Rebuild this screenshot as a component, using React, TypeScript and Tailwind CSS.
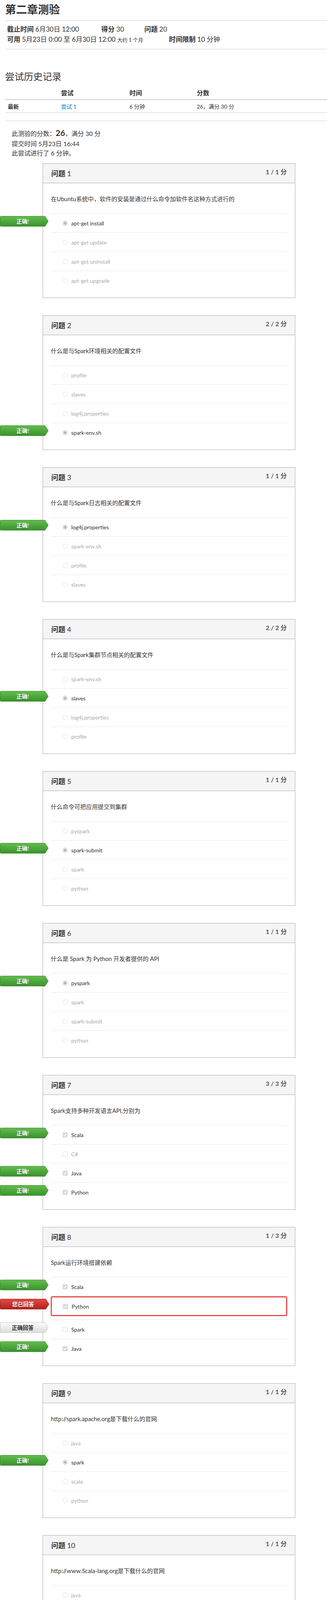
import React from "react";

type Opt = { t: string; sel?: boolean; badge?: "ok" | "you" | "right"; wrongBox?: boolean };
type Q = { text: string; score: string; opts: Opt[]; check?: boolean; unanswered?: boolean };

const tf = (): Opt[] => [{ t: "True", sel: true, badge: "ok" }, { t: "False" }];

const QS: Q[] = [
  { text: "在Ubuntu系统中，软件的安装是通过什么命令加软件名这种方式进行的", score: "1 / 1 分", opts: [{ t: "apt-get install", sel: true, badge: "ok" }, { t: "apt-get update" }, { t: "apt-get uninstall" }, { t: "apt-get upgrade" }] },
  { text: "什么是与Spark环境相关的配置文件", score: "2 / 2 分", opts: [{ t: "profile" }, { t: "slaves" }, { t: "log4j.properties" }, { t: "spark-env.sh", sel: true, badge: "ok" }] },
  { text: "什么是与Spark日志相关的配置文件", score: "1 / 1 分", opts: [{ t: "log4j.properties", sel: true, badge: "ok" }, { t: "spark-env.sh" }, { t: "profile" }, { t: "slaves" }] },
  { text: "什么是与Spark集群节点相关的配置文件", score: "2 / 2 分", opts: [{ t: "spark-env.sh" }, { t: "slaves", sel: true, badge: "ok" }, { t: "log4j.properties" }, { t: "profile" }] },
  { text: "什么命令可把应用提交到集群", score: "1 / 1 分", opts: [{ t: "pyspark" }, { t: "spark-submit", sel: true, badge: "ok" }, { t: "spark" }, { t: "python" }] },
  { text: "什么是 Spark 为 Python 开发者提供的 API", score: "1 / 1 分", opts: [{ t: "pyspark", sel: true, badge: "ok" }, { t: "spark" }, { t: "spark-submit" }, { t: "python" }] },
  { text: "Spark支持多种开发语言API,分别为", score: "3 / 3 分", check: true, opts: [{ t: "Scala", sel: true, badge: "ok" }, { t: "C#" }, { t: "Java", sel: true, badge: "ok" }, { t: "Python", sel: true, badge: "ok" }] },
  { text: "Spark运行环境搭建依赖", score: "1 / 3 分", check: true, opts: [{ t: "Scala", sel: true, badge: "ok" }, { t: "Python", sel: true, badge: "you", wrongBox: true }, { t: "Spark", badge: "right" }, { t: "Java", sel: true, badge: "ok" }] },
  { text: "http://spark.apache.org是下载什么的官网", score: "1 / 1 分", opts: [{ t: "java" }, { t: "spark", sel: true, badge: "ok" }, { t: "scala" }, { t: "python" }] },
  { text: "http://www.Scala-lang.org是下载什么的官网", score: "1 / 1 分", opts: [{ t: "java" }, { t: "spark" }, { t: "python" }, { t: "scala", sel: true, badge: "ok" }] },
  { text: "http://www.oracle.com是下载什么的官网", score: "1 / 1 分", opts: [{ t: "spark" }, { t: "python" }, { t: "java", sel: true, badge: "ok" }, { t: "pyspark" }] },
  { text: "Spark在使用之前，需要进行一定的配置，主要包括", score: "3 / 3 分", check: true, opts: [{ t: "修改Spark文件夹的访问权限", sel: true, badge: "ok" }, { t: "安装SSH", sel: true, badge: "ok" }, { t: "修改环境变量", sel: true, badge: "ok" }, { t: "节点参数配置", sel: true, badge: "ok" }] },
  { text: "Spark使用Scala语言进行开发，Scala运行在Java平台之上，因此需要下载并安装JDK和Scala。", score: "1 / 1 分", opts: tf() },
  { text: "集群启动完毕后，可以使用spark-submit命令进行任务的提交。", score: "1 / 1 分", opts: tf() },
  { text: "Spark在使用之前，需要进行一定的配置。主要包括安装SSH，实现免密码登录，修改环境变量，修改Spark文件夹的访问权限，节点参数配置等。", score: "1 / 1 分", opts: tf() },
  { text: "SSH（Secure Shell）是一种安全的传输协议。通过SSH协议对传输的数据进行加密，可用来登录远程主机，从而有效防止远程管理过程中的信息泄露问题", score: "1 / 1 分", opts: tf() },
  { text: "Windows操作系统里面的环境变量的设置是图形化的工具，在Linux里面需要手动的修改/etc/profile文件，也可以修改~/.bashrc文件。", score: "1 / 1 分", opts: tf() },
  { text: "Spark应用最终是以提交集群任务的方式进行的，所以在提交应用之前需要先启动集群，并查看集群状态，确保集群处于正常的可使用状态。", score: "0 / 2 分", unanswered: true, opts: [{ t: "True", badge: "right" }, { t: "False" }] },
  { text: "应用提交集群后，应用的基本信息和运行情况都将会在web界面中展现出来。", score: "1 / 1 分", opts: tf() },
  { text: "spark监控界面completed applications列表中，将会出现运行过的应用。包括应用的名称，使用的核心、内存、提交时间、所有者和运行时间等信息。", score: "2 / 2 分", opts: tf() },
];

function Badge({ kind, label, w }: { kind: "green" | "red" | "gray"; label: string; w: number }) {
  const id = "g" + kind;
  const stops =
    kind === "green" ? ["#62bd4d", "#3a932d"] : kind === "red" ? ["#e04a45", "#b4201f"] : ["#fbfbfb", "#dcdcdc"];
  return (
    <div className="relative h-[27px]" style={{ width: w }}>
      <svg width={w} height={27} className="absolute left-0 top-0">
        <defs>
          <linearGradient id={id} x1="0" y1="0" x2="0" y2="1">
            <stop offset="0" stopColor={stops[0]} />
            <stop offset="1" stopColor={stops[1]} />
          </linearGradient>
        </defs>
        <path
          d={`M0.5 2.5 Q0.5 0.5 2.5 0.5 L${w - 9} 0.5 L${w - 0.5} 13.5 L${w - 9} 26.5 L2.5 26.5 Q0.5 26.5 0.5 24.5 Z`}
          fill={`url(#${id})`}
          stroke={kind === "gray" ? "#c4c4c4" : kind === "green" ? "#3a8a2c" : "#a41c1c"}
          strokeWidth="1"
        />
      </svg>
      <div
        className={`relative flex h-[27px] items-center justify-center pr-[8px] text-[14px] font-bold leading-[18px] ${
          kind === "gray" ? "text-[#333]" : "text-white [text-shadow:0_1px_1px_rgba(0,0,0,0.45)]"
        }`}
      >
        {label}
      </div>
    </div>
  );
}

function Marker({ sel, check }: { sel?: boolean; check?: boolean }) {
  if (check)
    return (
      <span
        className={`flex h-[13px] w-[13px] shrink-0 items-center justify-center rounded-[2px] border ${
          sel ? "border-[#d4d4d4] bg-[#dcdcdc]" : "border-[#d8d8d8] bg-white"
        }`}
      >
        {sel && (
          <svg width="9" height="9" viewBox="0 0 9 9">
            <path d="M1.5 4.8 L3.6 6.8 L7.6 2" stroke="#fff" strokeWidth="1.6" fill="none" />
          </svg>
        )}
      </span>
    );
  return (
    <span
      className={`flex h-[13px] w-[13px] shrink-0 items-center justify-center rounded-full border ${
        sel ? "border-[#c6c6c6] bg-[#ececec]" : "border-[#dcdcdc] bg-white"
      }`}
    >
      {sel && <span className="h-[7px] w-[7px] rounded-full bg-[#b8b8b8]" />}
    </span>
  );
}

function Answer({ o, check }: { o: Opt; check?: boolean }) {
  const dark = o.sel || o.badge === "right";
  const inner = (
    <div className="flex items-center gap-[9px] pl-[30px]">
      <Marker sel={o.sel} check={check} />
      <span className={dark ? "text-[#333]" : "text-[#aaa]"}>{o.t}</span>
    </div>
  );
  return (
    <div className="relative border-t border-[#e8e8e8] text-[14px]">
      {o.badge && (
        <div className="absolute left-[-130px] top-[6px]">
          {o.badge === "ok" && <Badge kind="green" label="正确!" w={124} />}
          {o.badge === "you" && <Badge kind="red" label="您已回答" w={126} />}
          {o.badge === "right" && <Badge kind="gray" label="正确回答" w={124} />}
        </div>
      )}
      {o.wrongBox ? (
        <div className="pb-[9px]">
          <div className="flex h-[50px] items-center rounded-[4px] border-2 border-[#f00000]">
            <div className="ml-[-1px]">{inner}</div>
          </div>
        </div>
      ) : (
        <div className="flex h-[48px] items-center">{inner}</div>
      )}
    </div>
  );
}

function Card({ q, n }: { q: Q; n: number }) {
  return (
    <div className="relative ml-[96px] w-[646px] border border-[#aaa] bg-white">
      {q.unanswered && (
        <div className="absolute left-[-110px] top-[11px]">
          <Badge kind="red" label="未回答" w={124} />
        </div>
      )}
      <div className="flex h-[50px] items-start justify-between border-b border-[#aaa] bg-[#f5f5f5] px-[21px]">
        <div className="pt-[12px] text-[18px] font-bold text-[#333]">
          问题 <span className="font-normal">{n}</span>
        </div>
        <div className="pt-[9px] text-[16px] font-bold text-[#555]">{q.score}</div>
      </div>
      <div className="px-[20px] pb-[20px]">
        <div className="pb-[25px] pt-[28px] text-[15px] leading-[24px] text-[#333]">{q.text}</div>
        {q.opts.map((o, i) => (
          <Answer key={i} o={o} check={q.check} />
        ))}
      </div>
    </div>
  );
}

export default function App() {
  return (
    <div className="w-[836px] overflow-hidden bg-white text-[#333]" style={{ fontFamily: "Lato, 'Noto Sans CJK SC', sans-serif" }}>
      <div className="ml-[13px] w-[840px]">
        <h1 className="pt-[6px] text-[28px] font-bold leading-[36px] text-[#333]">第二章测验</h1>
        <div className="mt-[10px] border-t border-[#c7cdd1]" />
        <div className="px-[5px] pt-[9px] text-[17px] leading-[26px]">
          <div className="flex">
            <span className="w-[241px]"><b>截止时间</b> 6月30日 12:00</span>
            <span className="w-[110px]"><b>得分</b> 30</span>
            <span><b>问题</b> 20</span>
          </div>
          <div className="flex">
            <span className="w-[414px]"><b>可用</b> 5月23日 0:00 至 6月30日 12:00 <span className="text-[13px]">大约 1 个月</span></span>
            <span><b>时间限制</b> 10 分钟</span>
          </div>
        </div>
        <div className="mt-[10px] border-t border-[#c7cdd1]" />
        <h2 className="mt-[54px] text-[24px] leading-[32px] text-[#333]">尝试历史记录</h2>
        <div className="mt-[14px]">
          <div className="flex h-[28px] items-start text-[16px] font-bold">
            <span className="w-[143px]" />
            <span className="w-[175px]">尝试</span>
            <span className="w-[172px]">时间</span>
            <span>分数</span>
          </div>
          <div className="flex h-[34px] items-center border-t-2 border-[#c7cdd1] text-[14px]">
            <span className="w-[143px] pl-[7px] font-bold">最新</span>
            <span className="w-[175px] text-[#0081c6]">尝试 1</span>
            <span className="w-[172px]">6 分钟</span>
            <span>26，满分 30 分</span>
          </div>
          <div className="border-t border-[#c7cdd1]" />
          <div className="mt-[20px] border-t border-[#c7cdd1]" />
        </div>
        <div className="pl-[17px] pt-[18px] text-[16px] leading-[24px]">
          <div>此测验的分数：<b className="text-[21px]">26</b>，满分 30 分</div>
          <div className="mt-[2px]">提交时间 5月23日 16:44</div>
          <div>此尝试进行了 6 分钟。</div>
        </div>
        <div className="mt-[14px] flex flex-col gap-[44px]">
          {QS.map((q, i) => (
            <Card key={i} q={q} n={i + 1} />
          ))}
        </div>
        <div className="mt-[36px] pr-[16px] text-right text-[18px]">
          测验分数：<b className="text-[24px]">26</b>，满分 30 分
        </div>
        <div className="mt-[14px] border-t border-[#c7cdd1]" />
        <div className="mt-[13px] flex justify-between pb-[23px]">
          <button className="flex h-[38px] w-[94px] items-center justify-center gap-[6px] rounded-[3px] border border-[#c7cdd1] bg-[#f5f5f5] text-[17px] text-[#333]">
            <span className="text-[9px]">◀</span>上一页
          </button>
          <button className="flex h-[38px] w-[94px] items-center justify-center gap-[6px] rounded-[3px] border border-[#c7cdd1] bg-[#f5f5f5] text-[17px] text-[#333]">
            下一页<span className="text-[9px]">▶</span>
          </button>
        </div>
      </div>
    </div>
  );
}
